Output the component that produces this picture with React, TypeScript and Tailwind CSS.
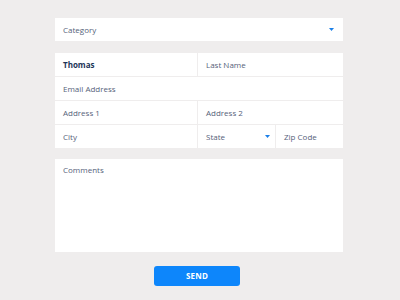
const Caret = () => (
  <svg width="5" height="3" viewBox="0 0 5 3" className="shrink-0">
    <path d="M0 0h5L2.5 3z" fill="#1a7fe8" />
  </svg>
);

const Field = ({
  label,
  className = "",
  bold,
  caret,
}: {
  label: string;
  className?: string;
  bold?: boolean;
  caret?: boolean;
}) => (
  <div
    className={`h-[23px] bg-white flex items-center justify-between pl-2 ${className}`}
  >
    <span
      className={
        bold
          ? "text-[8px] leading-[12px] font-bold text-[#1d3557]"
          : "text-[8px] leading-[12px] text-[#56627a]"
      }
    >
      {label}
    </span>
    {caret && <Caret />}
  </div>
);

export default function App() {
  return (
    <div
      className="w-[400px] h-[300px] bg-[#efeded] pt-[18px] pl-[55px]"
      style={{ fontFamily: '"Open Sans", "Liberation Sans", sans-serif' }}
    >
      <div className="w-[288px] flex flex-col">
        <Field label="Category" caret className="pr-[9px]" />

        <div className="mt-[12px] flex flex-col gap-px">
          <div className="flex gap-px">
            <Field label="Thomas" bold className="w-[142px]" />
            <Field label="Last Name" className="flex-1" />
          </div>
          <Field label="Email Address" />
          <div className="flex gap-px">
            <Field label="Address 1" className="w-[142px]" />
            <Field label="Address 2" className="flex-1" />
          </div>
          <div className="flex gap-px">
            <Field label="City" className="w-[142px]" />
            <Field label="State" caret className="w-[77px] pr-[5px]" />
            <Field label="Zip Code" className="flex-1" />
          </div>
        </div>

        <div className="mt-[11px] h-[93px] bg-white pl-2 pt-[5px]">
          <p className="text-[8px] leading-[12px] text-[#56627a]">Comments</p>
        </div>

        <div className="mt-[14px] flex pl-[99px]">
          <button className="w-[86px] h-[20px] rounded-[3px] bg-[#0d86fb] text-white text-[8px] leading-[12px] font-bold tracking-wide">
            SEND
          </button>
        </div>
      </div>
    </div>
  );
}
